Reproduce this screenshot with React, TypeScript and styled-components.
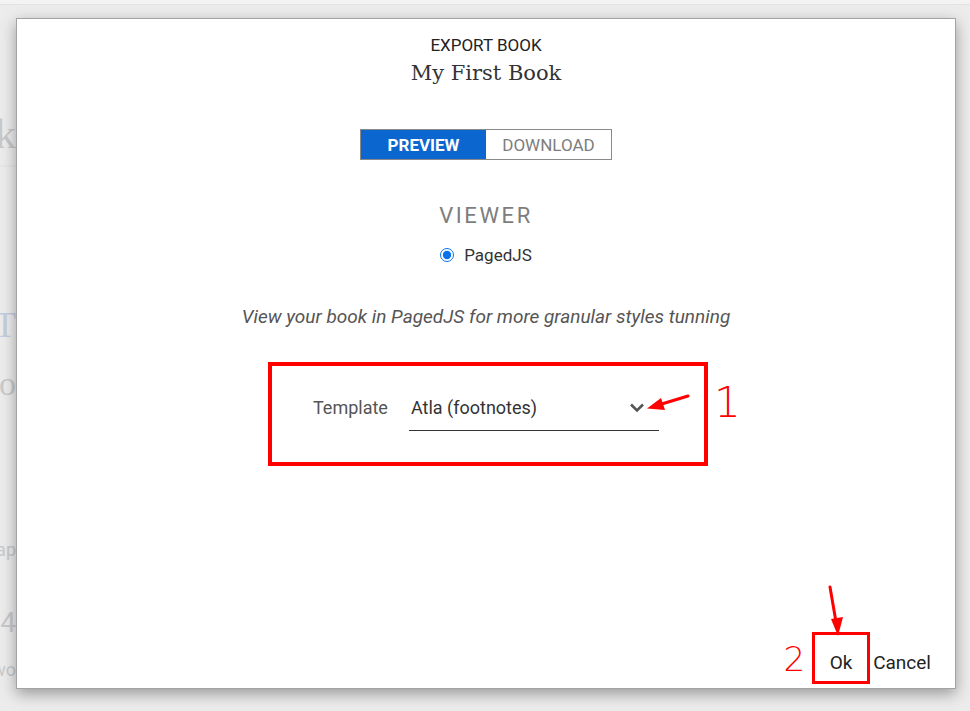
import styled, { createGlobalStyle } from 'styled-components';

const GlobalStyle = createGlobalStyle`
	html, body {
		margin: 0;
		padding: 0;
		width: 970px;
		height: 711px;
		overflow: hidden;
		background: #ececec;
		font-family: Roboto, 'Noto Sans', sans-serif;
	}
`;

const Page = styled.div`
	position: relative;
	width: 970px;
	height: 711px;
	overflow: hidden;
	background: #ececec;
`;

const TopStrip = styled.div`
	height: 4px;
	background: #f3f3f3;
	border-bottom: 1px solid #e2e2e2;
`;

const BehindContent = styled.div`
	display: flex;
	flex-direction: column;
	align-items: flex-end;
	width: 16px;
	overflow: hidden;
	opacity: 0.35;
	color: #8a8a8a;
	white-space: nowrap;
`;

const BehindLine = styled.div<{ $top: number; $size: number; $serif?: boolean; $color?: string }>`
	margin-top: ${(p) => p.$top}px;
	font-size: ${(p) => p.$size}px;
	line-height: 1;
	font-family: ${(p) => (p.$serif ? "'Liberation Serif', serif" : "Roboto, sans-serif")};
	color: ${(p) => p.$color || 'inherit'};
`;

const BehindRule = styled.div`
	width: 970px;
	height: 2px;
	margin-top: 10px;
	background: #dedede;
`;

const Modal = styled.div`
	position: absolute;
	left: 16px;
	top: 18px;
	width: 938px;
	height: 669px;
	background: #fff;
	border: 1px solid #a3a3a3;
	box-shadow: 0 5px 14px rgba(0, 0, 0, 0.35);
	display: flex;
	flex-direction: column;
	align-items: center;
	box-sizing: content-box;
`;

const Kicker = styled.div`
	margin-top: 16px;
	font-size: 17px;
	line-height: 20px;
	color: #222;
`;

const BookTitle = styled.div`
	margin-top: 4px;
	font-family: 'DejaVu Serif', 'Liberation Serif', serif;
	font-size: 21px;
	line-height: 28px;
	color: #333;
`;

const Tabs = styled.div`
	margin-top: 42px;
	display: flex;
	border: 1px solid #8a8a8a;
`;

const Tab = styled.div<{ $active?: boolean }>`
	width: 125px;
	height: 29px;
	display: flex;
	align-items: center;
	justify-content: center;
	font-size: 17px;
	font-weight: ${(p) => (p.$active ? 700 : 400)};
	color: ${(p) => (p.$active ? '#fff' : '#7d7d7d')};
	background: ${(p) => (p.$active ? '#0b66cf' : '#fff')};
`;

const SectionTitle = styled.div`
	margin-top: 42px;
	font-size: 22px;
	line-height: 28px;
	letter-spacing: 2.6px;
	color: #7d7d7d;
`;

const RadioRow = styled.label`
	margin-top: 15px;
	display: flex;
	align-items: center;
	gap: 10px;
	font-size: 17px;
	color: #333;
`;

const Radio = styled.input`
	margin: 0;
	width: 14px;
	height: 14px;
	accent-color: #0a72e8;
`;

const Description = styled.div`
	margin-top: 40px;
	font-size: 19px;
	font-style: italic;
	color: #555;
`;

const FieldRow = styled.div`
	margin-top: 34px;
	width: 100%;
	display: grid;
	grid-template-columns: 1fr auto 1fr;
	align-items: start;
`;

const Highlight = styled.div`
	grid-column: 2;
	margin-left: 4px;
	border: 4px solid #ff0000;
	display: flex;
	align-items: flex-start;
	padding: 30px 0 0 41px;
	box-sizing: content-box;
	width: 391px;
	height: 66px;
`;

const FieldLabel = styled.div`
	font-size: 18px;
	line-height: 24px;
	color: #555;
	margin-right: 21px;
`;

const Select = styled.div`
	width: 250px;
	height: 35px;
	border-bottom: 1px solid #333;
	display: flex;
	justify-content: space-between;
	padding-left: 2px;
	box-sizing: border-box;
	font-size: 18px;
	line-height: 24px;
	color: #333;
`;

const Chevron = styled.svg`
	margin-top: 6px;
	margin-right: 14px;
`;

const Marker = styled.div<{ $size: number }>`
	font-family: 'DejaVu Sans', sans-serif;
	font-weight: 300;
	font-size: ${(p) => p.$size}px;
	line-height: 1;
	color: #ff0000;
`;

const SideMarker = styled(Marker)`
	grid-column: 3;
	margin: 20px 0 0 6px;
`;

const Footer = styled.div`
	margin-top: auto;
	align-self: stretch;
	display: flex;
	justify-content: flex-end;
	align-items: center;
	padding: 0 24px 4px 0;
`;

const FooterMarker = styled(Marker)`
	margin: 2px 7px 0 0;
`;

const OkButton = styled.div`
	width: 52px;
	height: 38px;
	padding-top: 8px;
	border: 3px solid #ff0000;
	display: flex;
	align-items: center;
	justify-content: center;
	font-size: 19px;
	color: #222;
`;

const CancelButton = styled.div`
	margin-left: 3px;
	padding-top: 8px;
	font-size: 19px;
	color: #222;
`;

const ArrowLayer = styled.svg`
	position: absolute;
	left: 0;
	top: 0;
	pointer-events: none;
`;

export default function App() {
	return (
		<>
			<GlobalStyle />
			<Page>
				<TopStrip />
				<BehindContent>
					<BehindLine $top={108} $size={42} $serif>Book</BehindLine>
					<BehindRule />
					<BehindLine $top={140} $size={36} $serif $color="#7f93c8">T</BehindLine>
					<BehindLine $top={24} $size={34} $serif>Co</BehindLine>
					<BehindLine $top={140} $size={18}>chap</BehindLine>
					<BehindLine $top={50} $size={28}>4</BehindLine>
					<BehindLine $top={24} $size={18}>wo</BehindLine>
				</BehindContent>
				<Modal>
					<Kicker>EXPORT BOOK</Kicker>
					<BookTitle>My First Book</BookTitle>
					<Tabs>
						<Tab $active>PREVIEW</Tab>
						<Tab>DOWNLOAD</Tab>
					</Tabs>
					<SectionTitle>VIEWER</SectionTitle>
					<RadioRow>
						<Radio type="radio" checked readOnly />
						PagedJS
					</RadioRow>
					<Description>View your book in PagedJS for more granular styles tunning</Description>
					<FieldRow>
						<Highlight>
							<FieldLabel>Template</FieldLabel>
							<Select>
								<span>Atla (footnotes)</span>
								<Chevron width="16" height="11" viewBox="0 0 16 11">
									<path d="M2 2.5 L8 8.5 L14 2.5" fill="none" stroke="#555" strokeWidth="2.6" />
								</Chevron>
							</Select>
						</Highlight>
						<SideMarker $size={42}>1</SideMarker>
					</FieldRow>
					<Footer>
						<FooterMarker $size={34}>2</FooterMarker>
						<OkButton>Ok</OkButton>
						<CancelButton>Cancel</CancelButton>
					</Footer>
				</Modal>
				<ArrowLayer width="970" height="711" viewBox="0 0 970 711">
					<line x1="688" y1="396" x2="660" y2="404.5" stroke="#ff0000" strokeWidth="3" strokeLinecap="round" />
					<polygon points="647,408.5 661,398 665,410" fill="#ff0000" />
					<line x1="830" y1="587" x2="836" y2="622" stroke="#ff0000" strokeWidth="3" strokeLinecap="round" />
					<polygon points="838,636 831,619 843,617" fill="#ff0000" />
				</ArrowLayer>
			</Page>
		</>
	);
}
